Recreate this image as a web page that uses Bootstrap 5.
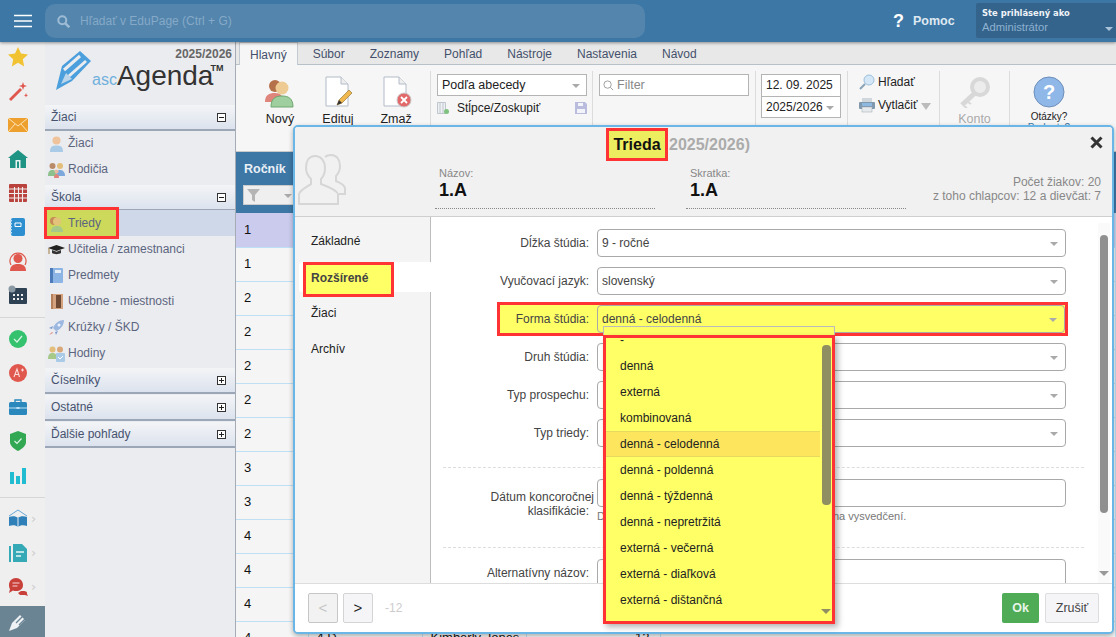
<!DOCTYPE html>
<html lang="sk">
<head>
<meta charset="UTF-8">
<title>ascAgenda</title>
<link rel="stylesheet" href="https://cdn.jsdelivr.net/npm/bootstrap@5.3.0/dist/css/bootstrap.min.css">
<style>
html, body { height: 637px; overflow: hidden; }
body { font-family: "Liberation Sans", Arial, sans-serif; font-size: 12px; color: #222; background: #efefef; }
.shell { position: relative; width: 1116px; height: 637px; overflow: hidden; }

/* top bar */
.topbar { height: 42px; background: #3d77a5; box-shadow: 0 1px 3px rgba(0,0,0,.4); position: relative; z-index: 2; }
.burger { width: 45px; }
.search-pill { width: 600px; height: 34px; margin-top: 4px; background: #5385ad; border-radius: 10px; color: #86a9c7; font-size: 12px; padding-left: 12px; gap: 10px; }
.help-q { font-size: 18px; font-weight: bold; color: #fff; margin-right: 9px; }
.help-txt { font-size: 12.5px; font-weight: bold; color: #dfe9f2; width: 63px; }
.userbox { width: 140px; height: 35px; margin-top: 3px; background: #34648c; border-radius: 2px 0 0 2px; padding: 4px 0 0 6px; position: relative; }
.userbox b { display: block; font-family: "DejaVu Sans", sans-serif; font-size: 8.4px; color: #eef3f8; line-height: 12px; }
.userbox span { display: block; font-size: 11.2px; color: #8eb1d0; line-height: 16px; }
.userbox i { position: absolute; right: 3px; bottom: 7px; border: 4px solid transparent; border-top: 4px solid #a9c3da; border-bottom: 0; }

/* icon rail */
.rail { width: 45px; height: 595px; background: #efefef; position: relative; padding-top: 0; }
.rail-ico { height: 34px; padding-left: 8px; }
.rail-ico:first-child { margin-top: -2px; }
.rail-ico svg { width: 20px; height: 20px; flex: none; }
.rail-sep { border-top: 1px solid #d6d6d6; margin: 5px 0 4px; }
.rail-ico em { font-style: normal; color: #ccc; font-size: 13px; margin-left: 3px; font-family: "DejaVu Sans", sans-serif; }
.rail-active { position: absolute; left: 0; right: 0; bottom: 0; height: 31px; background: #6b8494; }

/* sidebar */
.side { width: 191px; height: 595px; background: #ebecef; border-right: 1px solid #a6acb5; }
.logo-box { height: 63px; position: relative; }
.logo-year { position: absolute; right: 3px; top: 3px; font-size: 12px; font-weight: bold; color: #666; }
.logo-word { position: absolute; left: 47px; top: 17px; font-size: 28px; line-height: 34px; color: #333; white-space: nowrap; }
.logo-word small { font-size: 16px; color: #6fb0dd; }
.logo-word sup { font-size: 9px; font-weight: bold; top: -14px; left: -3px; position: relative; }
.logo-box svg { position: absolute; left: 11px; top: 9px; }
.side-head { height: 26px; padding: 0 9px 0 6px; background: linear-gradient(#f3f4f6, #dce3ee); border-bottom: 2px solid #9ba6b6; font-size: 12px; color: #46526f; margin-bottom: 1px; }
.toggler { width: 9px; height: 9px; border: 1px solid #333; background: #fff; position: relative; }
.toggler::before { content: ""; position: absolute; left: 1px; right: 1px; top: 3px; height: 1px; background: #222; }
.toggler.plus::after { content: ""; position: absolute; top: 1px; bottom: 1px; left: 3px; width: 1px; background: #222; }
.side-list { padding: 0; margin: -2px 0 3px; list-style: none; }
.side-list.tall { margin-bottom: 2px; }
.side-list li { height: 26px; padding-left: 3px; gap: 3px; font-size: 12px; color: #5c6580; }
.side-list li svg { width: 17px; height: 17px; flex: none; }
.side-list li.on { background: #cfd8e9; position: relative; }
.redbox-tree { position: absolute; left: -1px; top: -3px; width: 75px; height: 32px; border: 3px solid #f33; background: #ccd95b; }
.on-top { position: relative; }

/* ribbon */
.mainpart { width: 880px; position: relative; }
.tabs-strip { height: 23px; background: #e8e8e8; border-bottom: 1px solid #b9c0c8; padding-left: 3px; }
.rtab { padding: 0 12.5px; height: 23px; line-height: 25px; font-size: 12px; color: #44506b; }
.rtab.on { background: #f6f6f6; border: 1px solid #c4cad1; border-bottom: 0; padding: 0 10px; height: 24px; margin-right: 2.5px; }
.ribbon { height: 87px; background: #f6f6f6; border-bottom: 1px solid #c9c9c9; position: relative; padding-top: 9px; }
.bigbtn { width: 58px; font-size: 12.5px; text-align: center; }
.bigbtn svg { display: block; margin: 2px auto 2px; }
.first-btn { margin-left: 15px; }
.vsep { border-left: 1px solid #dcdcdc; height: 75px; margin-top: -3px; }
.gap5 { margin-left: 5px; }
.gap6 { margin-left: 6px; }
.gap11 { margin-left: 11px; }
.w150 { width: 150px; }
.w80 { width: 80px; }
.konto-btn { width: 69px; color: #aaa; }
.help-btn { width: 78px; font-size: 10px; line-height: 11px; }
.help-btn svg { margin-bottom: 3px; }
.help-btn span { color: #3d77a5; }
.rb-input { border: 1px solid #b4b4b4; background: #fff; height: 22px; line-height: 20px; padding: 0 4px; font-size: 12.5px; color: #222; position: relative; }
.rb-input.dated { font-size: 12px; }
.rb-input.top-part { border-bottom: 0; }
.rb-input.filter { color: #888; padding-left: 3px; }
.rb-input.filter svg { margin-right: 3px; }
.caret-g { position: absolute; right: 6px; top: 9px; border: 4px solid transparent; border-top: 4px solid #aaa; border-bottom: 0; }
.cols-row { margin-top: 2px; height: 20px; }
.cols-row span { font-size: 12px; margin-left: 8px; }
.tool-row { height: 16px; font-size: 12px; gap: 3px; margin-top: 7px; }
.tool-row:first-child { margin-top: 0; }
.tool-row i { border: 5px solid transparent; border-top: 7px solid #bbb; border-bottom: 0; margin-left: 1px; margin-top: 3px; }

/* table behind the dialog */
.grid-table { border-collapse: collapse; table-layout: fixed; width: 880px; margin: 0; }
.grid-table th { height: 61px; background: #3d77a5; color: #e9f0f6; font-size: 12.5px; vertical-align: top; padding: 8px 0 0 8px; }
.grid-table td { height: 34px; padding: 0 0 0 8px; border-bottom: 1px solid #bfdff4; border-right: 1px solid #bfdff4; font-size: 13px; color: #111; background: #f5f5f5; }
.grid-table tr.picked td { background: #cbcbee; }
.grid-table td.num-cell { text-align: right; padding-right: 10px; }
.col-a { width: 72px; }
.col-b { width: 114px; }
.col-c { width: 104px; }
.col-d { width: 134px; }
.filter-box { width: 60px; height: 20px; margin: 6px 0 0 -1px; background: #efefef; border: 1px solid #ccc; position: relative; }
.filter-box svg { position: absolute; left: 3px; top: 3px; }
.filter-box i { position: absolute; left: 40px; top: 8px; border: 4px solid transparent; border-top: 4px solid #aaa; border-bottom: 0; }

/* dialog */
.dlg { position: absolute; left: 293px; top: 125px; width: 821px; height: 509px; background: #fff; border: 2px solid #69b6e7; border-radius: 5px; box-shadow: 0 2px 5px rgba(0,0,0,.3); z-index: 5; overflow: hidden; }
.dlg-head { height: 90px; background: #f1f1f1; border-bottom: 1px solid #cfcfcf; position: relative; }
.dlg-title { height: 36px; font-size: 16px; font-weight: bold; color: #ababab; padding-left: 311px; gap: 1px; }
.dlg-title > span:last-child { line-height: 36px; }
.title-mark { border: 3px solid #f33; background: #eded60; color: #111; width: 62px; height: 33px; margin-top: 1px; text-align: center; line-height: 28px; }
.dlg-close { position: absolute; right: 9px; top: 9px; }
.dlg-sil { position: absolute; left: 3px; top: 26px; }
.dlg-fields { padding-left: 140px; gap: 31px; margin-top: 4px; }
.dlg-field { width: 220px; border-bottom: 1px dotted #888; padding: 0 0 5px 4px; height: 42px; }
.dlg-field label { display: block; font-size: 11px; color: #888; line-height: 13px; }
.dlg-field strong { display: block; font-size: 18px; line-height: 21px; color: #111; }
.dlg-stats { position: absolute; right: 11px; top: 48px; text-align: right; color: #888; font-size: 12px; line-height: 14px; }
.dlg-body { height: 366px; }
.dlg-tabs { width: 136px; background: #f4f4f4; border-right: 1px solid #bdbdbd; padding-top: 11px; }
.dlg-tab { height: 36px; line-height: 26px; padding-left: 16px; font-size: 12px; color: #222; }
.dlg-tab.on { height: 30px; margin: -2px -1px 8px 4px; background: #fff; padding-left: 0; position: relative; border-radius: 3px 0 0 3px; }
.tab-mark { position: absolute; left: 4px; top: 0; width: 91px; height: 35px; border: 3px solid #f33; background: #ffff66; font-weight: bold; color: #444; padding-left: 5px; line-height: 27px; }
.dlg-form { position: relative; padding: 12px 0 0; overflow: hidden; }
.frm-row { height: 28px; margin-bottom: 10px; }
.frm-lab { width: 166px; text-align: right; padding-right: 8px; color: #444; font-size: 12px; flex: none; }
.frm-sel { width: 469px; height: 28px; border: 1px solid #a9a9a9; border-radius: 4px; background: #fff; padding-left: 4px; line-height: 26px; font-size: 12px; color: #444; position: relative; }
.frm-sel::after { content: ""; position: absolute; right: 7px; top: 12px; border: 4px solid transparent; border-top: 4px solid #aaa; border-bottom: 0; }
.frm-sel.plain::after { display: none; }
.forma-mark { height: 34px; width: 571px; margin: -3px 0 7px 66px; border: 3px solid #f33; background: #ffff66; position: relative; z-index: 1; }
.forma-mark .frm-lab { width: 97px; }
.forma-mark .frm-sel { background: transparent; width: 468px; height: 28px; }
.dash { border-top: 1px dashed #ddd; margin: 0 28px 0 12px; }
.dash-a { margin-top: 20px; }
.dash-b { margin-top: 22px; }
.date-row { margin-top: 11px; height: 28px; }
.date-lab { line-height: 14px; padding-top: 11px; }
.date-lab span { margin-right: -5px; }
.frm-hint { margin: 0 0 0 166px; font-size: 11px; line-height: 18px; color: #777; }
.frm-hint span { margin-left: 228px; }
.alt-row { margin-top: 11px; }
.vbar { position: absolute; right: 2px; top: 6px; bottom: 0; width: 12px; background: #fafafa; }
.vbar span { position: absolute; left: 2px; top: 12px; width: 8px; height: 278px; background: #8f8f8f; border-radius: 4px; }
.vbar i { position: absolute; left: 1px; bottom: 7px; border: 5px solid transparent; border-top: 5px solid #999; border-bottom: 0; }
.dlg-foot { height: 51px; border-top: 1px solid #ddd; background: #fff; padding: 0 13px 2px; position: relative; }
.pager { width: 30px; height: 30px; border: 1px solid #d4d4d4; border-radius: 2px; background: #f5f5f8; font-size: 15px; line-height: 26px; padding: 0; color: #222; text-align: center; }
.pager + .pager { margin-left: 5px; }
.pager[disabled] { color: #c6c6c6; background: #f2f2f2; opacity: 1; }
.pg-num { color: #ccc; font-size: 12px; margin-left: 12px; }
.btn-okay { width: 37px; height: 30px; background: #4fab55; border: 0; border-radius: 2px; color: #e8f5e9; font-weight: bold; font-size: 12.5px; padding: 0; margin-right: 6px; }
.btn-cancel { width: 54px; height: 30px; background: #f5f5f8; border: 1px solid #ddd; border-radius: 2px; color: #444; font-size: 12.5px; padding: 0; }

/* open dropdown */
.picker-frame { position: absolute; left: 603px; top: 326px; width: 232px; height: 12px; border: 1px solid #bbb; background: #ffff66; z-index: 6; }
.picker { position: absolute; left: 603px; top: 335px; width: 232px; height: 289px; border: 3px solid #f33; background: #ffff66; box-shadow: 3px 3px 6px rgba(0,0,0,.3); z-index: 7; overflow: hidden; }
.picker ul { list-style: none; margin: -11px 0 0; padding: 0; }
.picker li { height: 26px; line-height: 26px; padding-left: 14px; width: 214px; font-size: 12px; color: #222; }
.picker li.cur { background: #fde65e; box-shadow: inset 0 1px #e8d860, inset 0 -1px #e8d860; }
.picker-thumb { position: absolute; right: 1px; top: 7px; width: 9px; height: 160px; background: #8f8f62; border-radius: 4px; }
.picker-down { position: absolute; right: 1px; bottom: 7px; border: 5px solid transparent; border-top: 5px solid #8f8f62; border-bottom: 0; }
</style>
</head>
<body>
<div class="shell">

  <!-- top bar -->
  <div class="topbar d-flex">
    <div class="burger d-flex align-items-center justify-content-center">
      <svg width="18" height="14" viewBox="0 0 18 14"><path d="M0 1.500h18M0 7h18M0 12.500h18" stroke="#fff" stroke-width="1.600"/></svg>
    </div>
    <div class="search-pill d-flex align-items-center">
      <svg width="13" height="13" viewBox="0 0 13 13"><circle cx="5.300" cy="5.300" r="4" fill="none" stroke="#9dbbd4" stroke-width="2"/><path d="M8.300 8.300l4 4" stroke="#9dbbd4" stroke-width="2.400"/></svg>
      <span>Hľadať v EduPage (Ctrl + G)</span>
    </div>
    <div class="ms-auto d-flex align-items-center">
      <span class="help-q">?</span><span class="help-txt">Pomoc</span>
    </div>
    <div class="userbox">
      <b>Ste prihlásený ako</b><span>Administrátor</span><i></i>
    </div>
  </div>

  <div class="d-flex">
    <!-- icon rail -->
    <div class="rail">
      <div class="rail-ico d-flex align-items-center"><svg viewBox="0 0 20 20"><path d="M10 0l3 6.600 7 .8-5.200 4.800 1.400 7.200L10 15.800 3.800 19.400l1.400-7.200L0 7.400l7-.8z" fill="#f1c232"/></svg></div>
      <div class="rail-ico d-flex align-items-center"><svg viewBox="0 0 20 20"><path d="M1 18L12 7l2 2L3 20z" fill="#e0574d"/><path d="M15 1l1 3 3 1-3 1-1 3-1-3-3-1 3-1zM18 12l.6 1.700 1.400.6-1.400.6-.6 1.700-.6-1.700-1.400-.6 1.400-.6z" fill="#e0574d"/></svg></div>
      <div class="rail-ico d-flex align-items-center"><svg viewBox="0 0 20 20"><rect y="3" width="20" height="14" fill="#eda02e"/><path d="M0 3l10 8 10-8M0 17l7-8M20 17l-7-8" fill="none" stroke="#fbe3b8" stroke-width="1"/></svg></div>
      <div class="rail-ico d-flex align-items-center"><svg viewBox="0 0 20 20"><path d="M10 1L0 9h2v10h16V9h2z" fill="#1f9384"/><rect x="7.500" y="11" width="5" height="8" fill="#e9f4f3"/><rect x="9" y="12.500" width="2" height="6.500" fill="#1f9384"/></svg></div>
      <div class="rail-ico d-flex align-items-center"><svg viewBox="0 0 20 20"><rect x="1" y="1" width="18" height="18" rx="1" fill="#b9433c"/><path d="M1 6h18M1 10.500h18M1 15h18M6.500 4v15M10.500 4v15M14.500 4v15" stroke="#efefef" stroke-width="1.100"/></svg></div>
      <div class="rail-ico d-flex align-items-center"><svg viewBox="0 0 20 20"><rect x="3" y="1" width="14" height="18" rx="2" fill="#2e8fd0"/><path d="M7 6h6v3.500H7z" fill="none" stroke="#fff"/><path d="M3 3v14" stroke="#bfe0f5" stroke-dasharray="1.500 1.500" stroke-width="2"/></svg></div>
      <div class="rail-ico d-flex align-items-center"><svg viewBox="0 0 20 20"><path d="M3 14A8 8 0 1 1 17 14" fill="none" stroke="#e0574d" stroke-width="1.200"/><circle cx="10" cy="7.500" r="4.500" fill="#e0574d"/><path d="M2 20c0-6 4-7 8-7s8 1 8 7z" fill="#e0574d"/></svg></div>
      <div class="rail-ico d-flex align-items-center"><svg viewBox="0 0 20 20"><rect x="1" y="3" width="18" height="16" rx="1" fill="#2f4254"/><circle cx="4" cy="4" r="3.500" fill="#8a98a4"/><path d="M5 9h2v2H5zM9 9h2v2H9zM13 9h2v2h-2zM5 13h2v2H5zM9 13h2v2H9zM13 13h2v2h-2z" fill="#efefef"/></svg></div>
      <div class="rail-sep"></div>
      <div class="rail-ico d-flex align-items-center"><svg viewBox="0 0 20 20"><circle cx="10" cy="10" r="9" fill="#35c26f"/><path d="M6 10l3 3 5-6" fill="none" stroke="#d8f4e3" stroke-width="1.200"/></svg></div>
      <div class="rail-ico d-flex align-items-center"><svg viewBox="0 0 20 20"><circle cx="10" cy="10" r="9" fill="#e0574d"/><path d="M6 14l3-8 2.500 8M7.200 11.500h3.500M13 7h3M14.500 5.500v3" fill="none" stroke="#fbdad7" stroke-width="1.100"/></svg></div>
      <div class="rail-ico d-flex align-items-center"><svg viewBox="0 0 20 20"><path d="M7 5V3h6v2" fill="none" stroke="#2a88bd" stroke-width="1.400"/><rect x="1" y="5" width="18" height="13" rx="1.500" fill="#2a88bd"/><path d="M1 11h18" stroke="#bfe0f5"/><rect x="8.500" y="10" width="3" height="2" fill="#bfe0f5"/></svg></div>
      <div class="rail-ico d-flex align-items-center"><svg viewBox="0 0 20 20"><path d="M10 0l8 3v8c0 4-4 7-8 9-4-2-8-5-8-9V3z" fill="#32a852"/><path d="M6.500 10l2.500 2.500 4.500-5" fill="none" stroke="#d8f4e3" stroke-width="1.200"/></svg></div>
      <div class="rail-ico d-flex align-items-center"><svg viewBox="0 0 20 20"><path d="M2 7h4v12H2zM8 11h4v8H8zM14 3h4v16h-4z" fill="#22bcd0"/></svg></div>
      <div class="rail-sep"></div>
      <div class="rail-ico d-flex align-items-center"><svg viewBox="0 0 20 20"><path d="M1 7l9-6 9 6" fill="none" stroke="#6aa7d6"/><path d="M1 8c3-1 7-1 9 1 2-2 6-2 9-1v9c-3-1-7-1-9 1-2-2-6-2-9-1z" fill="#2f7fb8"/><path d="M10 9v9" stroke="#e6f0f7"/></svg><em>›</em></div>
      <div class="rail-ico d-flex align-items-center"><svg viewBox="0 0 20 20"><path d="M1 3h2v16H1z" fill="#36a9b7"/><path d="M5 1h9l5 5v13H5z" fill="#36a9b7"/><path d="M8 9h8M8 13h5" stroke="#e6f6f8" stroke-width="1.500"/></svg><em>›</em></div>
      <div class="rail-ico d-flex align-items-center"><svg viewBox="0 0 20 20"><path d="M1 8c0-4 3-7 7-7s7 3 7 7-3 6-7 6c-1 0-2 0-3-.5L1 16l1-4c-.7-1-1-2.500-1-4z" fill="#c9403a"/><path d="M13 14c3 0 6 0 6 2l0 1 1 2-3-1h-5l-2-2z" fill="#c9403a"/><path d="M4.500 6h7M4.500 9h5" stroke="#f6d6d4"/></svg><em>›</em></div>
      <div class="rail-active d-flex align-items-center ps-2">
        <svg width="20" height="20" viewBox="0 0 20 20"><path d="M1 19l3-8L12 3l5 5-8 8z" fill="#eef2f4"/><path d="M8 11l8-8M11 13l7-7" stroke="#6b8494" stroke-width="1.300"/></svg>
      </div>
    </div>

    <!-- side menu -->
    <div class="side">
      <div class="logo-box">
        <span class="logo-year">2025/2026</span>
        <svg width="36" height="40" viewBox="0 0 36 40"><path d="M0 39L6 15 24 0l11 10-19 20z" fill="#4a9fdc"/><path d="M8 19L24 5M13 25L30 10" stroke="#ebecef" stroke-width="3"/><path d="M5 33l5-11 6 6z" fill="#ebecef" opacity=".7"/></svg>
        <span class="logo-word"><small>asc</small>Agenda<sup>TM</sup></span>
      </div>
      <div class="side-head d-flex align-items-center justify-content-between"><span>Žiaci</span><span class="toggler"></span></div>
      <ul class="side-list">
        <li class="d-flex align-items-center"><svg viewBox="0 0 17 17"><circle cx="8.500" cy="5.500" r="4" fill="#efc39b"/><path d="M2 17c0-6 3-6.500 6.500-6.500S15 11 15 17z" fill="#a9cbe8"/></svg>Žiaci</li>
        <li class="d-flex align-items-center"><svg viewBox="0 0 17 17"><circle cx="4.500" cy="5" r="3" fill="#b98a68"/><circle cx="12" cy="5" r="3" fill="#e3bd7a"/><path d="M0 15c0-5 2-6 4.500-6S8 10 8 15z" fill="#8cc08c"/><path d="M8 15c0-5 2-6 4-6s5 1 5 6z" fill="#7da8dc"/><circle cx="8.500" cy="10.500" r="2" fill="#e9b9a0"/><path d="M6 17c0-3 1-4 2.500-4s2.500 1 2.500 4z" fill="#e0857b"/></svg>Rodičia</li>
      </ul>
      <div class="side-head d-flex align-items-center justify-content-between"><span>Škola</span><span class="toggler"></span></div>
      <ul class="side-list tall">
        <li class="on d-flex align-items-center"><span class="redbox-tree"></span><svg class="on-top" viewBox="0 0 17 17"><circle cx="6" cy="6" r="4" fill="#c58a55"/><circle cx="9" cy="6.500" r="4" fill="#e3c27a"/><path d="M3 17c0-5 3-6 6-6s6 1 6 6z" fill="#a6c98a"/></svg><span class="on-top">Triedy</span></li>
        <li class="d-flex align-items-center"><svg viewBox="0 0 17 17"><path d="M0 7l8.500-3L17 7l-8.500 3z" fill="#222"/><path d="M4 9v3c2 1.500 7 1.500 9 0V9l-4.500 1.700z" fill="#333"/><path d="M1 7v6" stroke="#a07c3c"/></svg>Učitelia / zamestnanci</li>
        <li class="d-flex align-items-center"><svg viewBox="0 0 17 17"><rect x="2" y="1" width="13" height="15" rx="1" fill="#8cb4e4"/><rect x="2" y="1" width="3" height="15" fill="#4b7bb8"/><rect x="7" y="3" width="6" height="3" fill="#e6eef8"/></svg>Predmety</li>
        <li class="d-flex align-items-center"><svg viewBox="0 0 17 17"><rect x="3" y="1" width="12" height="15" fill="#d4a27e"/><rect x="8" y="2" width="5" height="13" fill="#6e4a35"/><rect x="3" y="1" width="2" height="15" fill="#b57f5a"/></svg>Učebne - miestnosti</li>
        <li class="d-flex align-items-center"><svg viewBox="0 0 17 17"><path d="M16 1c-5 0-9 3-11 8l3 3c5-2 8-6 8-11z" fill="#9db8e0"/><circle cx="11" cy="6" r="1.500" fill="#eaf1fa"/><path d="M5 7L1 9l3 1zM10 12l-2 4-1-3z" fill="#7d9bd0"/><path d="M1 16l3-3 1 1z" fill="#e0857b"/></svg>Krúžky / ŠKD</li>
        <li class="d-flex align-items-center"><svg viewBox="0 0 17 17"><circle cx="4.500" cy="4.500" r="3" fill="#e3bd7a"/><circle cx="12" cy="4.500" r="3" fill="#d9a87a"/><path d="M0 14c0-5 2-6 4.500-6S9 9 9 14z" fill="#a6c98a"/><rect x="8" y="8" width="9" height="9" rx="1" fill="#a9cbe8"/><path d="M10 12l2 2 3-3" fill="none" stroke="#fff"/></svg>Hodiny</li>
      </ul>
      <div class="side-head d-flex align-items-center justify-content-between"><span>Číselníky</span><span class="toggler plus"></span></div>
      <div class="side-head d-flex align-items-center justify-content-between"><span>Ostatné</span><span class="toggler plus"></span></div>
      <div class="side-head d-flex align-items-center justify-content-between"><span>Ďalšie pohľady</span><span class="toggler plus"></span></div>
    </div>

    <!-- ribbon and table -->
    <div class="mainpart">
      <div class="tabs-strip d-flex">
        <div class="rtab on">Hlavný</div>
        <div class="rtab">Súbor</div>
        <div class="rtab">Zoznamy</div>
        <div class="rtab">Pohľad</div>
        <div class="rtab">Nástroje</div>
        <div class="rtab">Nastavenia</div>
        <div class="rtab">Návod</div>
      </div>
      <div class="ribbon d-flex">
        <div class="bigbtn first-btn">
          <svg width="32" height="32" viewBox="0 0 32 32"><circle cx="11" cy="10" r="6" fill="#b5714a"/><path d="M1 26c0-7 4-9 10-9s8 3 8 9z" fill="#e0857b"/><circle cx="18" cy="12" r="6.500" fill="#eecb92"/><path d="M7 31c0-9 5-11 11-11s11 2 11 11z" fill="#9fce9f" stroke="#6ea86e"/></svg>
          Nový
        </div>
        <div class="bigbtn">
          <svg width="32" height="32" viewBox="0 0 32 32"><path d="M4 1h15l7 7v22H4z" fill="#fff" stroke="#b3bcc8"/><path d="M19 1v7h7" fill="#eee" stroke="#b3bcc8"/><path d="M15 29l2-5 10-10 3 3-10 10z" fill="#f0b84e" stroke="#8a6a2a" stroke-width=".6"/><path d="M15 29l2-5 3 3z" fill="#333"/></svg>
          Edituj
        </div>
        <div class="bigbtn">
          <svg width="32" height="32" viewBox="0 0 32 32"><path d="M4 1h15l7 7v22H4z" fill="#fff" stroke="#b3bcc8"/><path d="M19 1v7h7" fill="#eee" stroke="#b3bcc8"/><circle cx="24" cy="24" r="7" fill="#e2686a" stroke="#c9c9c9"/><path d="M21 21l6 6M27 21l-6 6" stroke="#fff" stroke-width="1.800"/></svg>
          Zmaž
        </div>
        <div class="vsep gap5"></div>
        <div class="gap6 w150">
          <div class="rb-input">Podľa abecedy<i class="caret-g"></i></div>
          <div class="cols-row d-flex align-items-center">
            <svg width="12" height="12" viewBox="0 0 12 12"><path d="M.5.5h8v11h-8zM3 .5v11M6 .5v11" fill="#eef1f4" stroke="#c0c6cd"/><circle cx="9.500" cy="9.500" r="2.500" fill="#7ec27e"/></svg>
            <span class="flex-fill">Stĺpce/Zoskupiť</span>
            <svg width="12" height="12" viewBox="0 0 12 12"><path d="M0 0h10l2 2v10H0z" fill="#b9bcdc"/><rect x="3" y="1" width="5" height="3" fill="#f3f3fa"/><rect x="2" y="7" width="8" height="4" fill="#f3f3fa"/></svg>
          </div>
        </div>
        <div class="vsep gap5"></div>
        <div class="gap6 w150">
          <div class="rb-input filter d-flex align-items-center"><svg width="11" height="11" viewBox="0 0 12 12"><circle cx="5" cy="5" r="4" fill="none" stroke="#999"/><path d="M8 8l3 3" stroke="#999"/></svg>Filter</div>
        </div>
        <div class="vsep gap6"></div>
        <div class="gap5 w80">
          <div class="rb-input dated top-part">12. 09. 2025</div>
          <div class="rb-input dated">2025/2026<i class="caret-g"></i></div>
        </div>
        <div class="vsep gap6"></div>
        <div class="gap11 w80">
          <div class="tool-row d-flex align-items-center"><svg width="16" height="16" viewBox="0 0 16 16"><circle cx="10" cy="6" r="5" fill="#d3e7f7" stroke="#9dbfdc"/><path d="M6 10l-5 5" stroke="#8aa3b8" stroke-width="2"/></svg>Hľadať</div>
          <div class="tool-row d-flex align-items-center"><svg width="16" height="16" viewBox="0 0 16 16"><rect x="3" y="1" width="10" height="5" fill="#cfd6dc"/><rect y="5" width="16" height="7" rx="1" fill="#7f98ae"/><rect x="3" y="6" width="10" height="3" fill="#8db8e0"/><rect x="3" y="10" width="10" height="5" fill="#e7eaed" stroke="#9aa6b0" stroke-width=".5"/></svg>Vytlačiť<i></i></div>
        </div>
        <div class="vsep"></div>
        <div class="bigbtn konto-btn">
          <svg width="32" height="32" viewBox="0 0 32 32"><circle cx="21" cy="11" r="8" fill="#ececec" stroke="#d8d8d8" stroke-width="4"/><path d="M16 17L3 29" stroke="#d8d8d8" stroke-width="5"/><path d="M5 30l3 2M9 26l3 2" stroke="#d8d8d8" stroke-width="2"/></svg>
          Konto
        </div>
        <div class="vsep"></div>
        <div class="bigbtn help-btn">
          <svg width="32" height="32" viewBox="0 0 32 32"><circle cx="16" cy="16" r="15" fill="#8fb7e8" stroke="#6d8fbb"/><text x="16" y="23" text-anchor="middle" font-size="20" font-weight="bold" fill="#fff" font-family="Liberation Sans">?</text></svg>
          Otázky?<br><span>Podnety?</span>
        </div>
      </div>

      <table class="grid-table">
        <colgroup><col class="col-a"><col class="col-b"><col class="col-c"><col class="col-d"><col></colgroup>
        <thead>
          <tr><th colspan="5">Ročník<div class="filter-box"><svg width="13" height="13" viewBox="0 0 13 13"><path d="M0 0h13L8 6v7L5 11V6z" fill="#b5b5b5"/></svg><i></i></div></th></tr>
        </thead>
        <tbody>
          <tr class="picked"><td>1</td><td></td><td></td><td></td><td></td></tr>
          <tr><td>1</td><td></td><td></td><td></td><td></td></tr>
          <tr><td>2</td><td></td><td></td><td></td><td></td></tr>
          <tr><td>2</td><td></td><td></td><td></td><td></td></tr>
          <tr><td>2</td><td></td><td></td><td></td><td></td></tr>
          <tr><td>2</td><td></td><td></td><td></td><td></td></tr>
          <tr><td>2</td><td></td><td></td><td></td><td></td></tr>
          <tr><td>3</td><td></td><td></td><td></td><td></td></tr>
          <tr><td>3</td><td></td><td></td><td></td><td></td></tr>
          <tr><td>4</td><td></td><td></td><td></td><td></td></tr>
          <tr><td>4</td><td></td><td></td><td></td><td></td></tr>
          <tr><td>4</td><td></td><td></td><td></td><td></td></tr>
          <tr><td>4</td><td>4.D</td><td>Kimberly Jones</td><td class="num-cell">12</td><td></td></tr>
        </tbody>
      </table>
    </div>
  </div>

  <!-- dialog -->
  <div class="dlg">
    <div class="dlg-head">
      <svg class="dlg-sil" width="48" height="54" viewBox="0 0 48 54"><path d="M17 3c6 0 10 5 10 12 0 5-2 9-4 11v5c5 2 15 5 17 10v10H1V41c2-5 10-8 12-10v-5c-2-2-5-6-5-11 0-7 3-12 9-12z" fill="none" stroke="#d6d6d6" stroke-width="2"/><path d="M27 4c1-1 3-2 6-2 6 0 9 5 9 11 0 5-2 8-4 10v5c4 2 8 3 9 7v6h-6" fill="none" stroke="#d6d6d6" stroke-width="2"/></svg>
      <div class="dlg-title d-flex align-items-start"><span class="title-mark">Trieda</span><span>2025/2026)</span></div>
      <svg class="dlg-close" width="13" height="13" viewBox="0 0 13 13"><path d="M1.500 1.500l10 10M11.500 1.500l-10 10" stroke="#333" stroke-width="3"/></svg>
      <div class="dlg-fields d-flex">
        <div class="dlg-field"><label>Názov:</label><strong>1.A</strong></div>
        <div class="dlg-field"><label>Skratka:</label><strong>1.A</strong></div>
      </div>
      <div class="dlg-stats">Počet žiakov: 20<br>z toho chlapcov: 12 a dievčat: 7</div>
    </div>
    <div class="dlg-body d-flex">
      <div class="dlg-tabs">
        <div class="dlg-tab">Základné</div>
        <div class="dlg-tab on"><span class="tab-mark">Rozšírené</span></div>
        <div class="dlg-tab">Žiaci</div>
        <div class="dlg-tab">Archív</div>
      </div>
      <div class="dlg-form flex-fill">
        <div class="frm-row d-flex align-items-center"><div class="frm-lab">Dĺžka štúdia:</div><div class="frm-sel">9 - ročné</div></div>
        <div class="frm-row d-flex align-items-center"><div class="frm-lab">Vyučovací jazyk:</div><div class="frm-sel">slovenský</div></div>
        <div class="forma-mark d-flex align-items-center"><div class="frm-lab">Forma štúdia:</div><div class="frm-sel">denná - celodenná</div></div>
        <div class="frm-row d-flex align-items-center"><div class="frm-lab">Druh štúdia:</div><div class="frm-sel"></div></div>
        <div class="frm-row d-flex align-items-center"><div class="frm-lab">Typ prospechu:</div><div class="frm-sel"></div></div>
        <div class="frm-row d-flex align-items-center"><div class="frm-lab">Typ triedy:</div><div class="frm-sel"></div></div>
        <div class="dash dash-a"></div>
        <div class="date-row d-flex align-items-start">
          <div class="frm-lab date-lab"><span>Dátum koncoročnej</span><br>klasifikácie:</div><div class="frm-sel plain"></div>
        </div>
        <div class="frm-hint">D<span>na vysvedčení.</span></div>
        <div class="dash dash-b"></div>
        <div class="frm-row alt-row d-flex align-items-center"><div class="frm-lab">Alternatívny názov:</div><div class="frm-sel plain"></div></div>
        <div class="vbar"><span></span><i></i></div>
      </div>
    </div>
    <div class="dlg-foot d-flex align-items-center">
      <button class="btn pager" disabled>&lt;</button>
      <button class="btn pager">&gt;</button>
      <span class="pg-num">-12</span>
      <button class="btn btn-okay ms-auto">Ok</button>
      <button class="btn btn-cancel">Zrušiť</button>
    </div>
  </div>

  <!-- open select -->
  <div class="picker-frame"></div>
  <div class="picker">
    <ul>
      <li>-</li>
      <li>denná</li>
      <li>externá</li>
      <li>kombinovaná</li>
      <li class="cur">denná - celodenná</li>
      <li>denná - poldenná</li>
      <li>denná - týždenná</li>
      <li>denná - nepretržitá</li>
      <li>externá - večerná</li>
      <li>externá - diaľková</li>
      <li>externá - dištančná</li>
      <li>večerná</li>
    </ul>
    <span class="picker-thumb"></span><i class="picker-down"></i>
  </div>
</div>
<script src="https://cdn.jsdelivr.net/npm/bootstrap@5.3.0/dist/js/bootstrap.bundle.min.js"></script>
</body>
</html>
